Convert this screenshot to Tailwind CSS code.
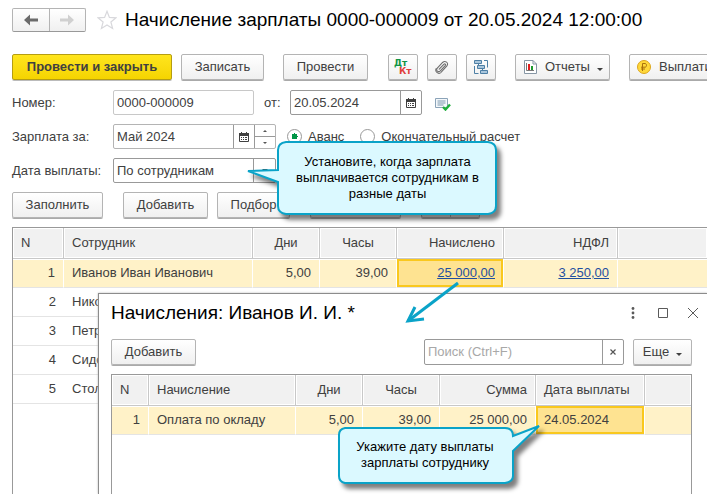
<!DOCTYPE html>
<html lang="ru">
<head>
    <meta charset="UTF-8">
    <meta name="viewport" content="width=device-width, initial-scale=1.0">
    <title>Начисление зарплаты</title>
    <script src="https://cdn.jsdelivr.net/npm/@tailwindcss/browser@4"></script>
</head>
<body class="relative h-screen overflow-hidden bg-white font-['Liberation_Sans',Arial,sans-serif] text-[13px] leading-4 text-[#404040]">
    <main class="flex h-full flex-col pl-3 pt-2">
        <!-- Title -->
        <header class="flex h-6 shrink-0 items-center">
            <div class="flex h-6 w-[74px] shrink-0 rounded-xs border border-[#b4b4b4] border-b-[#999] bg-linear-to-b from-white to-[#f0f0f0]">
                <button aria-label="Назад" class="flex flex-1 items-center justify-center border-r border-[#b4b4b4]">
                    <svg width="14" height="12" viewBox="0 0 14 12" fill="#6b6b6b"><path d="M0 6 6 0.5V4.5H14V7.5H6V11.5Z"/></svg>
                </button>
                <button aria-label="Вперед" class="flex flex-1 items-center justify-center">
                    <svg width="14" height="12" viewBox="0 0 14 12" fill="#d0d0d0"><path d="M14 6 8 0.5V4.5H0V7.5H8V11.5Z"/></svg>
                </button>
            </div>
            <button aria-label="В избранное" class="ml-[11px] shrink-0">
                <svg width="20" height="20" viewBox="0 0 20 20" fill="none" stroke="#d8d8dc" stroke-width="1.2"><path d="M10 1.3 12.4 7.4 19 7.8 13.9 12 15.6 18.5 10 14.9 4.4 18.5 6.1 12 1 7.8 7.6 7.4Z"/></svg>
            </button>
            <h1 class="ml-2 whitespace-nowrap text-[19px] leading-6 text-black">Начисление зарплаты 0000-000009 от 20.05.2024 12:00:00</h1>
        </header>

        <!-- Command bar -->
        <div class="mb-[10px] mt-[22px] flex h-[26px] shrink-0">
            <button class="w-40 shrink-0 rounded-xs border border-[#b59d12] bg-linear-to-b from-[#ffe51c] to-[#f5d400] font-bold shadow-[0_1px_0_#bbb]">Провести и закрыть</button>
            <button class="ml-[9px] w-[83px] shrink-0 rounded-xs border border-[#b4b4b4] bg-linear-to-b from-white to-[#f0f0f0] shadow-[0_1px_0_#aaa]">Записать</button>
            <button class="ml-[19px] w-[85px] shrink-0 rounded-xs border border-[#b4b4b4] bg-linear-to-b from-white to-[#f0f0f0] shadow-[0_1px_0_#aaa]">Провести</button>
            <button aria-label="Дт Кт" class="ml-5 flex w-[30px] shrink-0 items-center justify-center rounded-xs border border-[#b4b4b4] bg-linear-to-b from-white to-[#f0f0f0] shadow-[0_1px_0_#aaa]">
                <svg width="18" height="18" viewBox="0 0 18 18" font-family="DejaVu Sans, sans-serif" font-size="9" font-weight="bold"><text x="0" y="8" fill="#109445">Дт</text><text x="5" y="16" fill="#e0403c">Кт</text></svg>
            </button>
            <button aria-label="Файлы" class="ml-[9px] flex w-[30px] shrink-0 items-center justify-center rounded-xs border border-[#b4b4b4] bg-linear-to-b from-white to-[#f0f0f0] shadow-[0_1px_0_#aaa]">
                <svg width="14" height="14" viewBox="0 0 14 14" fill="none" stroke="#6f6f6f" stroke-width="1.1" stroke-linecap="round"><path d="M4.2 9.2 8.8 4.4C9.9 3.3 11.2 4.5 10.2 5.7L5.3 10.9C3.3 12.8 0.4 10.5 2.3 8.2L7.6 2.5C10.1 0 14.2 2.9 11.9 5.9L6.2 12.1"/><path d="M5.4 12.9C3.2 14.4-0.4 11.6 1.2 8.6"/></svg>
            </button>
            <button aria-label="Структура подчиненности" class="ml-[9px] flex w-[30px] shrink-0 items-center justify-center rounded-xs border border-[#b4b4b4] bg-linear-to-b from-white to-[#f0f0f0] shadow-[0_1px_0_#aaa]">
                <svg width="16" height="16" viewBox="0 0 16 16" fill="#a9c6dc" stroke="#4d7fa5"><path d="M1.5 1.5h7v3h-7zM4.5 6.5h7v3h-7zM7.5 11.5h7v3h-7z"/><path fill="none" d="M11 1.5h3.5v7M1.5 7v7.5h4M5.500 4.500v2M9.500 9.500v2"/></svg>
            </button>
            <button class="ml-[19px] flex w-[95px] shrink-0 items-center rounded-xs border border-[#b4b4b4] bg-linear-to-b from-white to-[#f0f0f0] pl-2 shadow-[0_1px_0_#aaa]">
                <svg width="13" height="14" viewBox="0 0 13 14"><path d="M0.5 0.5H9L12.5 4V13.5H0.5Z" fill="#fff" stroke="#8797a5"/><path d="M9 0.5V4H12.5" fill="none" stroke="#8797a5"/><path d="M2.5 3V10.5H10" fill="none" stroke="#777"/><path d="M4 4h2v6H4z" fill="#e01e1e"/><path d="M7 6h2v4H7z" fill="#1e9a30"/></svg>
                <span class="ml-2">Отчеты</span>
                <svg class="ml-[7px] mt-1" width="6" height="3" viewBox="0 0 6 3" fill="#404040"><path d="M0 0H6L3 3Z"/></svg>
            </button>
            <button class="ml-[19px] flex shrink-0 items-center rounded-xs border border-[#b4b4b4] bg-linear-to-b from-white to-[#f0f0f0] pl-[7px] pr-3 shadow-[0_1px_0_#aaa]">
                <svg width="14" height="14" viewBox="0 0 14 14"><circle cx="7" cy="7" r="6.5" fill="#ffd83a" stroke="#dba51c"/><path d="M5.5 11V3.5H8C10 3.5 10 7.2 8 7.2H4M4 9H8" fill="none" stroke="#a8700c"/></svg>
                <span class="ml-2">Выплатить</span>
            </button>
        </div>

        <!-- Document fields -->
        <form class="flex shrink-0 flex-col gap-[9px]">
            <div class="flex h-[25px] items-center">
                <label for="number" class="w-[101px] shrink-0">Номер:</label>
                <input id="number" type="text" value="0000-000009" class="h-full w-[141px] shrink-0 rounded-xs border border-[#c8c8c8] px-[3px]">
                <label for="date" class="ml-[10px] w-[26px] shrink-0">от:</label>
                <div class="flex h-full w-[132px] shrink-0 rounded-xs border border-[#999]">
                    <input id="date" type="text" value="20.05.2024" class="min-w-0 flex-1 px-[3px]">
                    <button type="button" aria-label="Выбрать дату" class="flex w-[21px] items-center justify-center border-l border-[#999]">
                        <svg width="10" height="10" viewBox="0 0 10 10"><path d="M0.5 1.5h9v8h-9z" fill="#fff" stroke="#404040"/><path d="M0 1h10v3H0zM2 0h1v2H2zM7 0h1v2H7zM2 5h1v1H2zM4 5h1v1H4zM6 5h2v1H6zM2 7h1v1H2zM4 7h1v1H4zM6 7h2v1H6z" fill="#404040"/></svg>
                    </button>
                </div>
                <svg class="ml-[13px] mt-1 shrink-0" width="16" height="13" viewBox="0 0 16 13"><path d="M0.5 0.5h12v9h-12z" fill="#f4f8fb" stroke="#8ba3b8"/><path d="M2.5 3h8M2.5 5h8M2.5 7h6" stroke="#7d98ae"/><path d="M8 9 10.5 11.5 15 6.5" fill="none" stroke="#1fae3c" stroke-width="2.4"/></svg>
            </div>
            <div class="flex h-[25px] items-center">
                <label for="month" class="w-[101px] shrink-0">Зарплата за:</label>
                <div class="flex h-full w-[163px] shrink-0 rounded-xs border border-[#b4b4b4]">
                    <input id="month" type="text" value="Май 2024" class="min-w-0 flex-1 px-[3px]">
                    <button type="button" aria-label="Выбрать месяц" class="flex w-[21px] items-center justify-center border-l border-[#999]">
                        <svg width="10" height="10" viewBox="0 0 10 10"><path d="M0.5 1.5h9v8h-9z" fill="#fff" stroke="#404040"/><path d="M0 1h10v3H0zM2 0h1v2H2zM7 0h1v2H7zM2 5h1v1H2zM4 5h1v1H4zM6 5h2v1H6zM2 7h1v1H2zM4 7h1v1H4zM6 7h2v1H6z" fill="#404040"/></svg>
                    </button>
                    <div class="flex w-[21px] flex-col border-l border-[#999]">
                        <button type="button" aria-label="Следующий месяц" class="flex flex-1 items-center justify-center border-b border-[#999]">
                            <svg width="4" height="2" viewBox="0 0 4 2" fill="#555"><path d="M0 2H4L2 0Z"/></svg>
                        </button>
                        <button type="button" aria-label="Предыдущий месяц" class="flex flex-1 items-center justify-center">
                            <svg width="4" height="2" viewBox="0 0 4 2" fill="#555"><path d="M0 0H4L2 2Z"/></svg>
                        </button>
                    </div>
                </div>
                <input id="advance" type="radio" name="kind" checked class="ml-[11px] size-[15px] shrink-0 appearance-none rounded-full border border-[#999] checked:bg-[radial-gradient(circle,#009646_3px,#fff_3px)]">
                <label for="advance" class="ml-[6px] shrink-0">Аванс</label>
                <input id="final" type="radio" name="kind" class="ml-4 size-[15px] shrink-0 appearance-none rounded-full border border-[#999] checked:bg-[radial-gradient(circle,#009646_3px,#fff_3px)]">
                <label for="final" class="ml-[6px] shrink-0 whitespace-nowrap">Окончательный расчет</label>
            </div>
            <div class="flex h-[25px] items-center">
                <label for="payday" class="w-[101px] shrink-0 whitespace-nowrap">Дата выплаты:</label>
                <div class="flex h-full w-[163px] shrink-0 rounded-xs border border-[#999]">
                    <select id="payday" class="min-w-0 flex-1 appearance-none px-[3px]">
                        <option>По сотрудникам</option>
                    </select>
                    <span class="flex w-[22px] items-center justify-center border-l border-[#999]">
                        <svg width="6" height="3" viewBox="0 0 6 3" fill="#404040"><path d="M0 0H6L3 3Z"/></svg>
                    </span>
                </div>
            </div>
            <div class="flex h-[26px]">
                <button type="button" class="w-[91px] shrink-0 rounded-xs border border-[#b4b4b4] bg-linear-to-b from-white to-[#f0f0f0] shadow-[0_1px_0_#aaa]">Заполнить</button>
                <button type="button" class="ml-5 w-[85px] shrink-0 rounded-xs border border-[#b4b4b4] bg-linear-to-b from-white to-[#f0f0f0] shadow-[0_1px_0_#aaa]">Добавить</button>
                <button type="button" class="ml-[9px] w-[73px] shrink-0 rounded-xs border border-[#b4b4b4] bg-linear-to-b from-white to-[#f0f0f0] shadow-[0_1px_0_#aaa]">Подбор</button>
                <button type="button" aria-label="Рассчитать" class="ml-5 w-[91px] shrink-0 rounded-xs border border-[#b4b4b4] bg-linear-to-b from-white to-[#f0f0f0] shadow-[0_1px_0_#aaa]"></button>
                <div class="ml-5 flex w-[59px] shrink-0 rounded-xs border border-[#b4b4b4] bg-linear-to-b from-white to-[#f0f0f0] shadow-[0_1px_0_#aaa]">
                    <button type="button" aria-label="Вверх" class="flex-1 border-r border-[#b4b4b4]"></button>
                    <button type="button" aria-label="Вниз" class="flex-1"></button>
                </div>
            </div>
        </form>

        <!-- Employees -->
        <div class="mt-[9px] min-h-0 flex-1 overflow-hidden border-l border-t border-[#999]">
            <table class="w-full table-fixed border-separate border-spacing-0 whitespace-nowrap">
                <colgroup><col class="w-[51px]"><col class="w-[189px]"><col class="w-[67px]"><col class="w-[77px]"><col class="w-[107px]"><col class="w-[114px]"><col></colgroup>
                <thead>
                    <tr class="h-[31px] bg-[#f1f1f1] text-left *:border-b *:border-r *:border-[#c8c8c8] *:px-2 *:font-normal *:shadow-[inset_0_0_0_1px_#fff] *:last:border-r-0">
                        <th>N</th>
                        <th>Сотрудник</th>
                        <th class="text-center">Дни</th>
                        <th class="text-center">Часы</th>
                        <th class="text-right">Начислено</th>
                        <th class="text-right">НДФЛ</th>
                        <th></th>
                    </tr>
                </thead>
                <tbody>
                    <tr class="h-[29px] bg-[#fff2c8] text-right *:border-b *:border-r *:border-b-[#e4e4e4] *:border-r-white *:px-2 *:shadow-[inset_0_1px_0_#fff] *:last:border-r-0">
                        <td>1</td>
                        <td class="text-left">Иванов Иван Иванович</td>
                        <td>5,00</td>
                        <td>39,00</td>
                        <td class="bg-[#fee391] shadow-[inset_0_0_0_2px_#f9c81e]!"><a href="#" class="text-[#1f4fa0] underline">25 000,00</a></td>
                        <td><a href="#" class="text-[#1f4fa0] underline">3 250,00</a></td>
                        <td></td>
                    </tr>
                    <tr class="h-[29px] *:border-b *:border-[#e4e4e4] *:px-2">
                        <td class="text-right">2</td>
                        <td colspan="6">Нико</td>
                    </tr>
                    <tr class="h-[29px] *:border-b *:border-[#e4e4e4] *:px-2">
                        <td class="text-right">3</td>
                        <td colspan="6">Петр</td>
                    </tr>
                    <tr class="h-[29px] *:border-b *:border-[#e4e4e4] *:px-2">
                        <td class="text-right">4</td>
                        <td colspan="6">Сидо</td>
                    </tr>
                    <tr class="h-[29px] *:border-b *:border-[#e4e4e4] *:px-2">
                        <td class="text-right">5</td>
                        <td colspan="6">Стол</td>
                    </tr>
                </tbody>
            </table>
        </div>
    </main>

    <!-- Accruals window -->
    <section class="absolute bottom-0 left-[98px] right-0 top-[293px] flex flex-col border-l border-t border-[#8c8c8c] bg-white pl-3 pr-[15px] shadow-[0_0_2px_#bbb]">
        <div class="flex h-[38px] shrink-0 items-center">
            <h2 class="flex-1 whitespace-nowrap text-[19px] leading-6 text-black">Начисления: Иванов И. И. *</h2>
            <div class="-mr-[7px] flex items-center gap-[19px] text-[#5a5a5a]">
                <button aria-label="Меню" class="flex w-3 justify-center"><svg width="4" height="12" viewBox="0 0 4 12" fill="currentColor"><circle cx="2" cy="1.5" r="1.4"/><circle cx="2" cy="6" r="1.4"/><circle cx="2" cy="10.5" r="1.4"/></svg></button>
                <button aria-label="Развернуть"><svg width="10" height="10" viewBox="0 0 10 10" fill="none" stroke="currentColor"><path d="M0.5 0.5h9v9h-9z"/></svg></button>
                <button aria-label="Закрыть"><svg width="12" height="12" viewBox="0 0 12 12" fill="none" stroke="currentColor"><path d="M1 1 11 11M11 1 1 11"/></svg></button>
            </div>
        </div>
        <div class="mt-[7px] flex h-[26px] shrink-0">
            <button class="w-[85px] shrink-0 rounded-xs border border-[#b4b4b4] bg-linear-to-b from-white to-[#f0f0f0] shadow-[0_1px_0_#aaa]">Добавить</button>
            <div class="ml-auto flex w-[200px] rounded-xs border border-[#999]">
                <input type="text" aria-label="Поиск" placeholder="Поиск (Ctrl+F)" class="min-w-0 flex-1 px-[3px] placeholder:text-[#a8a8a8]">
                <button aria-label="Очистить" class="flex w-[21px] items-center justify-center border-l border-[#999]">
                    <svg width="6" height="6" viewBox="0 0 6 6" fill="none" stroke="#555" stroke-width="1.2"><path d="M0.5 0.5 5.5 5.5M5.5 0.5 0.5 5.5"/></svg>
                </button>
            </div>
            <button class="ml-[9px] flex w-[59px] shrink-0 items-center justify-center rounded-xs border border-[#b4b4b4] bg-linear-to-b from-white to-[#f0f0f0] shadow-[0_1px_0_#aaa]">
                Еще
                <svg class="ml-[7px] mt-1" width="6" height="3" viewBox="0 0 6 3" fill="#404040"><path d="M0 0H6L3 3Z"/></svg>
            </button>
        </div>
        <div class="mt-[9px] min-h-0 flex-1 overflow-hidden border-x border-t border-[#999]">
            <table class="w-full table-fixed border-separate border-spacing-0 whitespace-nowrap">
                <colgroup><col class="w-[37px]"><col class="w-[147px]"><col class="w-[67px]"><col class="w-[77px]"><col class="w-[96px]"><col class="w-[109px]"><col></colgroup>
                <thead>
                    <tr class="h-[31px] bg-[#f1f1f1] text-left *:border-b *:border-r *:border-[#c8c8c8] *:px-2 *:font-normal *:shadow-[inset_0_0_0_1px_#fff] *:last:border-r-0">
                        <th>N</th>
                        <th>Начисление</th>
                        <th class="text-center">Дни</th>
                        <th class="text-center">Часы</th>
                        <th class="text-right">Сумма</th>
                        <th>Дата выплаты</th>
                        <th></th>
                    </tr>
                </thead>
                <tbody>
                    <tr class="h-[29px] bg-[#fff2c8] text-right *:border-b *:border-r *:border-b-[#e4e4e4] *:border-r-white *:px-2 *:shadow-[inset_0_1px_0_#fff] *:last:border-r-0">
                        <td>1</td>
                        <td class="text-left">Оплата по окладу</td>
                        <td>5,00</td>
                        <td>39,00</td>
                        <td>25 000,00</td>
                        <td class="bg-[#fee391] text-left shadow-[inset_0_0_0_2px_#f9c81e]!">24.05.2024</td>
                        <td></td>
                    </tr>
                </tbody>
            </table>
        </div>
    </section>

    <!-- Arrow from the amount to the window -->
    <svg class="pointer-events-none absolute left-[400px] top-[278px]" width="64" height="50" viewBox="0 0 64 50" fill="none" stroke="#0aa3c8" stroke-width="3"><path d="M58 5 8 43"/><path d="M15 29 8 43 24 41"/></svg>

    <!-- Callouts -->
    <div class="absolute left-[246px] top-[140px] h-[76px] w-[252px] pl-[31px]">
        <svg class="absolute left-0 top-0 overflow-visible drop-shadow-[4px_5px_2px_rgb(0_0_0/0.5)]" width="252" height="76" viewBox="0 0 252 76" fill="#dbf9ff" stroke="#0aa3c8" stroke-width="2"><path d="M40 2H242Q250 3 250 10V66Q250 73 242 74H40Q32 73 32 66V42L2 31 32 30V10Q32 3 40 2Z"/></svg>
        <p class="relative whitespace-nowrap pt-[14px] text-center text-black">Установите, когда зарплата<br>выплачивается сотрудникам в<br>разные даты</p>
    </div>
    <div class="absolute left-[337px] top-[426px] h-[58px] w-[204px] pr-7">
        <svg class="absolute left-0 top-0 overflow-visible drop-shadow-[4px_5px_2px_rgb(0_0_0/0.5)]" width="204" height="58" viewBox="0 0 204 58" fill="#dbf9ff" stroke="#0aa3c8" stroke-width="2"><path d="M8 2H168Q176 2 176 10L202 0 176 25V50Q176 56 168 57H8Q2 56 2 50V9Q2 3 8 2Z"/></svg>
        <p class="relative whitespace-nowrap pt-[13px] text-center text-black">Укажите дату выплаты<br>зарплаты сотруднику</p>
    </div>
</body>
</html>
